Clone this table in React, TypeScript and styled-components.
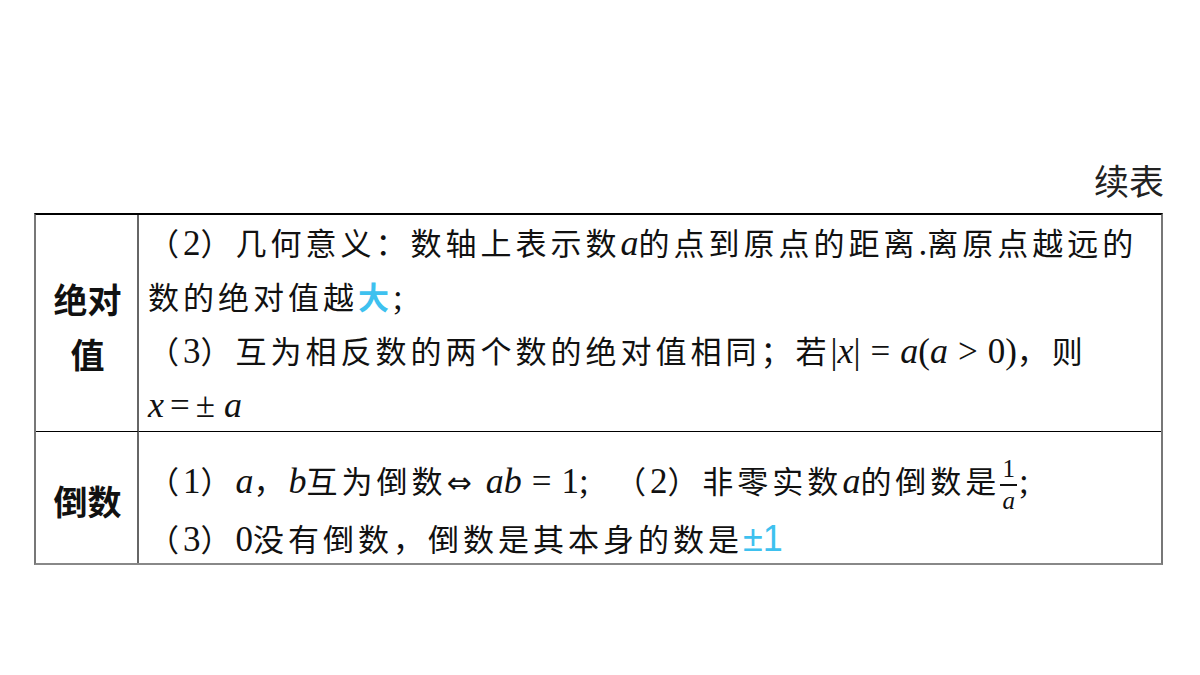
import React from "react";
import styled, { createGlobalStyle } from "styled-components";

const Global = createGlobalStyle`
  html, body { margin: 0; padding: 0; background: #fff; }
  body { font-family: "Noto Sans CJK SC", "Noto Sans", sans-serif; color: #111; }
`;

const Page = styled.div`
  width: 1200px;
  height: 675px;
  box-sizing: border-box;
  padding: 160px 37px 0 34px;
  display: flex;
  flex-direction: column;
`;

const Caption = styled.div`
  align-self: flex-end;
  font-size: 35px;
  line-height: 40px;
  height: 40px;
  margin-bottom: 13px;
  margin-right: -1px;
  color: #222;
  font-weight: 400;
`;

const Table = styled.div`
  display: grid;
  grid-template-columns: 103px 1fr;
  border-top: 2px solid #000;
  border-left: 2px solid #777;
  border-right: 2px solid #777;
  border-bottom: 2px solid #888;
`;

const Label = styled.div<{ $last?: boolean }>`
  display: flex;
  align-items: center;
  justify-content: center;
  text-align: center;
  border-right: 2px solid #666;
  border-bottom: ${(p) => (p.$last ? "none" : "1px solid #000")};
  font-weight: 700;
  font-size: 34px;
  line-height: 55px;
  padding: 6px 14px 0 16px;
  color: #111;
`;

const Cell = styled.div<{ $last?: boolean; $pt: number }>`
  border-bottom: ${(p) => (p.$last ? "none" : "1px solid #000")};
  padding: ${(p) => p.$pt}px 0 0 9px;
  font-size: 31px;
  letter-spacing: 4px;
  color: #111;
`;

const Line = styled.div<{ $h: number }>`
  height: ${(p) => p.$h}px;
  line-height: ${(p) => p.$h}px;
  white-space: nowrap;
`;

const M = styled.span`
  font-family: "Liberation Serif", "DejaVu Serif", serif;
  font-style: italic;
  font-size: 36px;
  letter-spacing: 0;
`;

const N = styled.span`
  font-family: "Liberation Serif", "DejaVu Serif", serif;
  font-style: normal;
  font-size: 35px;
  letter-spacing: 0;
`;

const Op = styled.span<{ $m?: number }>`
  font-family: "Liberation Serif", "DejaVu Serif", serif;
  font-style: normal;
  font-size: 35px;
  letter-spacing: 0;
  margin: 0 ${(p) => p.$m ?? 10}px;
`;

const Sym = styled.span`
  font-family: "DejaVu Sans", sans-serif;
  font-style: normal;
  font-size: 30px;
  letter-spacing: 0;
  margin-right: 14px;
`;

const Blue = styled.span`
  color: #3ec1ef;
  font-weight: 700;
`;

const BlueSans = styled.span`
  color: #3ec1ef;
  font-family: "Liberation Sans", Arial, sans-serif;
  font-size: 36px;
  letter-spacing: 0;
`;

const Frac = styled.span`
  display: inline-flex;
  flex-direction: column;
  align-items: center;
  vertical-align: middle;
  font-family: "Liberation Serif", serif;
  font-size: 25px;
  line-height: 22px;
  letter-spacing: 0;
  margin: 0 2px 0 0;
`;

const FracTop = styled.span`
  padding-bottom: 4px;
`;

const FracBot = styled.span`
  font-style: italic;
  border-top: 2px solid #111;
  padding: 4px 2px 0;
`;

export default function App() {
  return (
    <>
      <Global />
      <Page>
        <Caption>续表</Caption>
        <Table>
          <Label>绝对值</Label>
          <Cell $pt={0}>
            <Line $h={54}>
              （<N>2</N>）几何意义：数轴上表示数<M>a</M>的点到原点的距离<N>.</N>离原点越远的
            </Line>
            <Line $h={54}>
              数的绝对值越<Blue>大</Blue><N>;</N>
            </Line>
            <Line $h={54}>
              （<N>3</N>）互为相反数的两个数的绝对值相同；若
              <M>
                <N>|</N>x<N>|</N>
                <Op>=</Op>a<N>(</N>a<Op>&gt;</Op>
                <N>0)</N>
              </M>
              ，则
            </Line>
            <Line $h={54}>
              <M>
                x<Op $m={6}>=</Op>
                <N>±</N> a
              </M>
            </Line>
          </Cell>
          <Label $last>倒数</Label>
          <Cell $last $pt={15}>
            <Line $h={66}>
              （<N>1</N>）<M>a</M>，<M>b</M>互为倒数<Sym>⇔</Sym>
              <M>ab</M>
              <Op>=</Op>
              <N>1;</N>
              <N>&nbsp;&nbsp;&nbsp;</N>（<N>2</N>）非零实数<M>a</M>的倒数是
              <Frac>
                <FracTop>1</FracTop>
                <FracBot>a</FracBot>
              </Frac>
              <N>;</N>
            </Line>
            <Line $h={50}>
              （<N>3</N>）<N>0</N>没有倒数，倒数是其本身的数是<BlueSans>±1</BlueSans>
            </Line>
          </Cell>
        </Table>
      </Page>
    </>
  );
}
